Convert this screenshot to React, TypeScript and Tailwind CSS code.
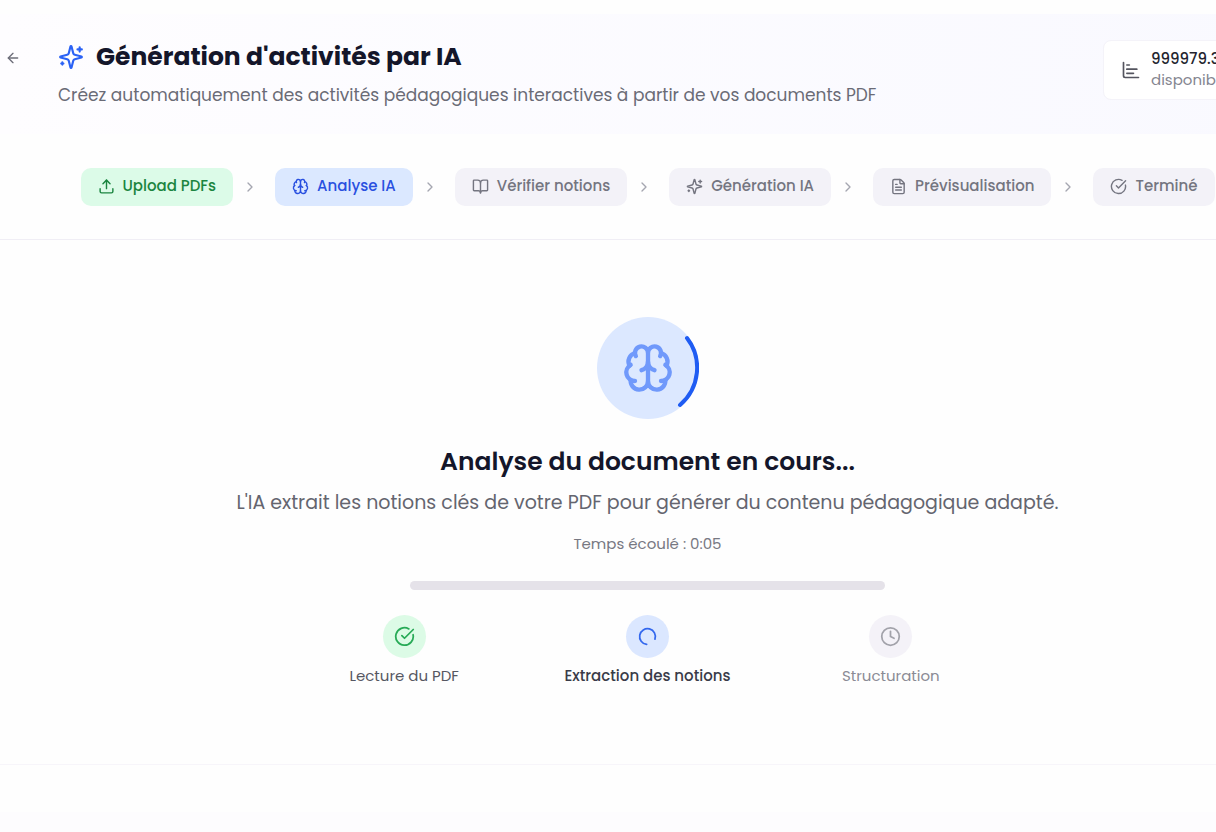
import { FC } from "react";
import {
  ArrowLeft,
  BookOpen,
  Brain,
  ChartBar,
  ChevronRight,
  CircleCheckBig,
  Clock,
  FileText,
  Upload,
} from "lucide-react";

interface IconProps {
  size?: number;
  className?: string;
}

interface Step {
  label: string;
  icon: FC<IconProps>;
  className: string;
}

const Sparkles: FC<IconProps> = ({ size = 24, className }) => (
  <svg
    width={size}
    height={size}
    viewBox="0 0 24 24"
    className={className}
    fill="none"
    stroke="currentColor"
    strokeWidth="2"
    strokeLinecap="round"
    strokeLinejoin="round"
  >
    <path d="M9.937 15.5A2 2 0 0 0 8.5 14.063l-6.135-1.582a.5.5 0 0 1 0-.962L8.5 9.936A2 2 0 0 0 9.937 8.5l1.582-6.135a.5.5 0 0 1 .963 0L14.063 8.5A2 2 0 0 0 15.5 9.937l6.135 1.581a.5.5 0 0 1 0 .964L15.5 14.063a2 2 0 0 0-1.437 1.437l-1.582 6.135a.5.5 0 0 1-.963 0z" />
    <path d="M20 3v4M22 5h-4M4 17v2M5 18H3" />
  </svg>
);

const idle = "bg-[#f3f2f8] text-[#747580]";

const steps: Step[] = [
  { label: "Upload PDFs", icon: Upload, className: "bg-[#dcfbe8] text-[#1b8540]" },
  { label: "Analyse IA", icon: Brain, className: "bg-[#dbe8ff] text-[#2950e0]" },
  { label: "Vérifier notions", icon: BookOpen, className: idle },
  { label: "Génération IA", icon: Sparkles, className: idle },
  { label: "Prévisualisation", icon: FileText, className: idle },
  { label: "Terminé", icon: CircleCheckBig, className: idle },
];

const Header: FC = () => (
  <header className="flex h-[120px] items-start justify-between bg-linear-to-r from-[#fefdff] to-[#f9f9ff] pt-[26px]">
    <div className="flex items-start">
      <button
        aria-label="Retour"
        className="mt-[10px] ml-[5px] mr-[37px] text-[#6c6d78]"
      >
        <ArrowLeft size={16} />
      </button>
      <div>
        <h1 className="flex items-center gap-3 text-[25px] leading-[34px] font-bold text-[#14162a]">
          <Sparkles size={26} className="text-[#2b62f5]" />
          Génération d'activités par IA
        </h1>
        <p className="mt-2 text-[17px] leading-[26px] text-[#6a6b76]">
          Créez automatiquement des activités pédagogiques interactives à partir
          de vos documents PDF
        </p>
      </div>
    </div>
    <div className="flex h-[60px] w-[192px] shrink-0 items-center gap-[10px] rounded-lg border border-[#f4f3f9] bg-white px-[17px]">
      <ChartBar size={20} className="text-[#54555f]" />
      <div className="pb-[2px] leading-[21px]">
        <div className="text-[15px] font-medium text-[#24252f]">999979.3</div>
        <div className="text-[15px] text-[#858691]">disponibles</div>
      </div>
    </div>
  </header>
);

const Stepper: FC = () => (
  <ol className="flex h-[106px] items-center justify-center border-b border-[#f0eef5]">
    {steps.map(({ label, icon: Icon, className }, index) => (
      <li key={label} className="flex items-center">
        {index > 0 && (
          <ChevronRight size={16} className="mr-[17px] ml-[9px] text-[#a5a6b0]" />
        )}
        <div
          className={`flex h-[38px] items-center gap-2 rounded-[10px] px-[17px] text-[15px] font-medium whitespace-nowrap ${className}`}
        >
          <Icon size={17} />
          {label}
        </div>
      </li>
    ))}
  </ol>
);

const AnalysisBadge: FC = () => (
  <div className="flex size-[102px] items-center justify-center rounded-full bg-[#dce8ff]">
    <svg
      viewBox="0 0 102 102"
      className="absolute size-[102px]"
      fill="none"
      stroke="#1f5cf3"
      strokeWidth="4"
      strokeLinecap="round"
    >
      <path d="M90 21A49 49 0 0 1 83 88" />
    </svg>
    <Brain size={52} className="text-[#7099fb]" />
  </div>
);

const Analysis: FC = () => (
  <main className="flex h-[525px] flex-col items-center border-b border-[#f7f5fa] pt-[77px]">
    <AnalysisBadge />
    <h2 className="mt-[26px] text-[25px] leading-[34px] font-semibold text-[#14162a]">
      Analyse du document en cours...
    </h2>
    <p className="mt-[9px] text-[19px] leading-[30px] text-[#64656f]">
      L'IA extrait les notions clés de votre PDF pour générer du contenu
      pédagogique adapté.
    </p>
    <p className="mt-[15px] text-[15px] leading-[22px] text-[#777882]">
      Temps écoulé : 0:05
    </p>
    <div
      role="progressbar"
      aria-label="Progression de l'analyse"
      className="mt-[26px] h-[9px] w-[475px] rounded-full bg-[#e5e2e9]"
    />
    <div className="mt-[25px] grid w-[730px] grid-cols-3 text-center text-[15px] leading-[22px]">
      <div className="flex flex-col items-center gap-[7px] text-[#565762]">
        <div className="flex size-[43px] items-center justify-center rounded-full bg-[#dcfbe6] text-[#27aa56]">
          <CircleCheckBig size={21} />
        </div>
        Lecture du PDF
      </div>
      <div className="flex flex-col items-center gap-[7px] font-medium text-[#393b48]">
        <div className="flex size-[43px] items-center justify-center rounded-full bg-[#dbe7ff]">
          <svg
            viewBox="0 0 24 24"
            className="size-[21px]"
            fill="none"
            stroke="#3368ee"
            strokeWidth="2"
            strokeLinecap="round"
          >
            <path d="M20.5 15A9 9 0 1 0 11 21" />
          </svg>
        </div>
        Extraction des notions
      </div>
      <div className="flex flex-col items-center gap-[7px] text-[#8b8b95]">
        <div className="flex size-[43px] items-center justify-center rounded-full bg-[#f4f2f8] text-[#a2a2aa]">
          <Clock size={21} />
        </div>
        Structuration
      </div>
    </div>
  </main>
);

const App: FC = () => {
  return (
    <div className="min-h-screen overflow-hidden bg-[#fefefe] pt-[14px] font-[Poppins,Inter,sans-serif]">
      {/* the panel runs past the right edge of the window */}
      <div className="-mr-[79px]">
        <Header />
        <Stepper />
        <Analysis />
        <div className="mt-[47px] h-5 bg-[#fdfcfe]" />
      </div>
    </div>
  );
};

export default App;
